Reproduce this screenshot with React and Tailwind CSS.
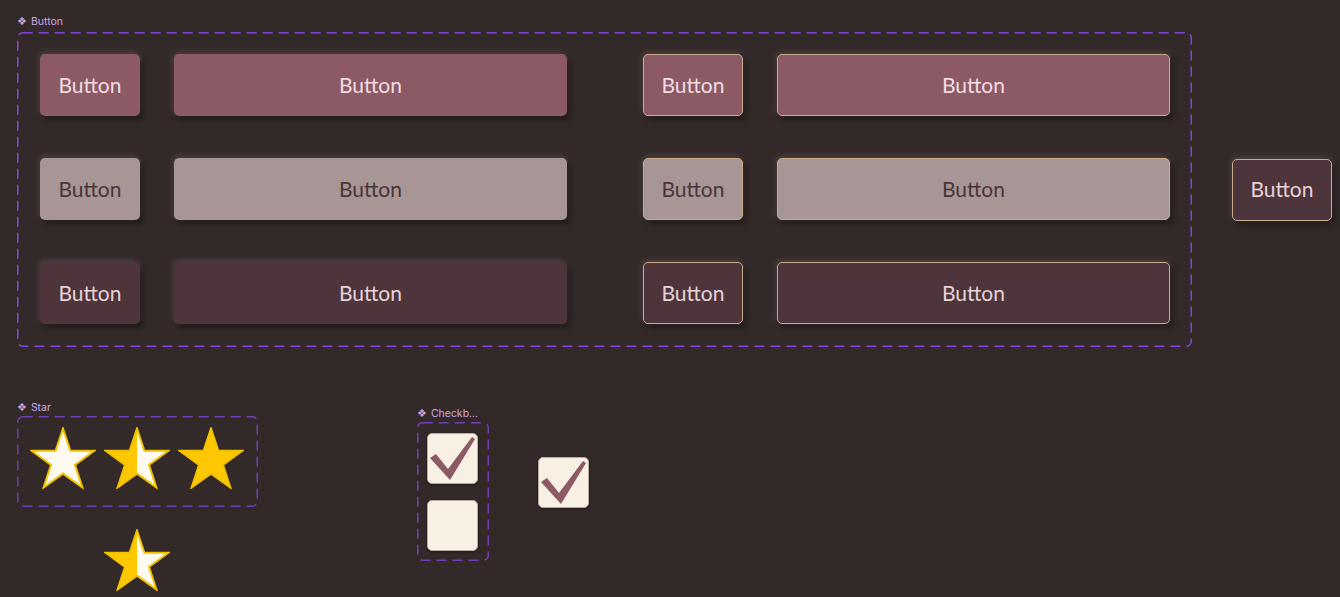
import React from "react";

const ROWS = [
  { bg: "bg-[#8b5a64]", text: "text-[#f3dde3]" },
  { bg: "bg-[#a89596]", text: "text-[#4a3539]" },
  { bg: "bg-[#4e353b]", text: "text-[#e8d2d8]" },
];

const SHADOW =
  "shadow-[-1px_-2px_6px_rgba(255,255,255,0.13),3px_4px_6px_rgba(0,0,0,0.4)]";

function Btn({ row, wide, outlined }) {
  const r = ROWS[row];
  return (
    <button
      className={`${wide ? "w-[393px]" : "w-[100px]"} h-[62px] shrink-0 rounded-[5px] ${r.bg} ${r.text} ${SHADOW} ${
        outlined ? "border border-[#c9ab8a]" : ""
      } flex items-center justify-center text-[21px] font-normal pb-[1px]`}
    >
      Button
    </button>
  );
}

function Label({ children }) {
  return (
    <div className="flex items-center gap-[4px] h-[12px] text-[10.5px] leading-[12px] text-[#c9a7e6] font-['Inter','DejaVu_Sans',sans-serif]">
      <span className="font-['DejaVu_Sans'] text-[11px]">❖</span>
      <span>{children}</span>
    </div>
  );
}

// dashed outline drawn over the frame, Figma-style long dashes
function Frame({ className, color, children }) {
  return (
    <div className={`relative ${className}`}>
      <svg className="absolute inset-0 w-full h-full pointer-events-none overflow-visible">
        <rect
          x="0.75"
          y="0.75"
          width="calc(100% - 1.5px)"
          height="calc(100% - 1.5px)"
          rx="5"
          fill="none"
          stroke={color}
          strokeWidth="1.5"
          strokeDasharray="10 6"
        />
      </svg>
      {children}
    </div>
  );
}

const STAR_POINTS =
  "33,1.5 40.4,23.8 64.4,23.8 45,37.9 52.4,60.5 33,46.6 13.6,60.5 21,37.9 1.6,23.8 25.6,23.8";

function Star({ kind, id }) {
  const fill =
    kind === "full" ? "#ffc800" : kind === "empty" ? "#fffaf0" : `url(#${id})`;
  return (
    <svg width="66" height="62" viewBox="0 0 66 62" className="shrink-0">
      {kind === "half" && (
        <defs>
          <linearGradient id={id} x1="0" x2="1" y1="0" y2="0">
            <stop offset="50%" stopColor="#ffc800" />
            <stop offset="50%" stopColor="#fffaf0" />
          </linearGradient>
        </defs>
      )}
      <polygon
        points={STAR_POINTS}
        fill={fill}
        stroke="#f2c200"
        strokeWidth="2"
        strokeLinejoin="miter"
      />
    </svg>
  );
}

function Checkbox({ checked }) {
  return (
    <div className="w-[51px] h-[51px] shrink-0 rounded-[5px] bg-[#f8f0e3] border border-[#b9aca1] shadow-[0_1px_3px_rgba(0,0,0,0.45)] relative">
      {checked && (
        <svg
          width="51"
          height="51"
          viewBox="0 0 51 51"
          className="absolute -left-px -top-px overflow-visible"
        >
          <path d="M3 25 L9 21 L21 36 L45 4 L48 6 L23 47 Z" fill="#8b5a64" />
        </svg>
      )}
    </div>
  );
}

export default function App() {
  return (
    <div className="w-full h-[597px] overflow-hidden bg-[#332928] pl-[17px] pt-[16px] font-['Lato','Open_Sans',sans-serif]">
      <Label>Button</Label>
      <div className="mt-[4px] flex items-center gap-[40px]">
        <Frame
          color="#8444dc"
          className="w-[1175px] h-[315px] shrink-0 pt-[22px] pl-[23px] flex flex-col gap-[42px]"
        >
          {[0, 1, 2].map((row) => (
            <div key={row} className="flex">
              <Btn row={row} />
              <div className="ml-[34px]">
                <Btn row={row} wide />
              </div>
              <div className="ml-[76px]">
                <Btn row={row} outlined />
              </div>
              <div className="ml-[34px]">
                <Btn row={row} wide outlined />
              </div>
            </div>
          ))}
        </Frame>
        <Btn row={2} outlined />
      </div>

      <div className="mt-[55px] flex items-start">
        <div className="w-[241px] shrink-0">
          <Label>Star</Label>
          <Frame
            color="#6e40b6"
            className="mt-[2px] h-[91px] pt-[11px] pl-[13px] flex gap-[8px]"
          >
            <Star kind="empty" />
            <Star kind="half" id="half-a" />
            <Star kind="full" />
          </Frame>
          <div className="mt-[22px] ml-[87px]">
            <Star kind="half" id="half-b" />
          </div>
        </div>

        <div className="ml-[159px] mt-[6px]">
          <Label>Checkb...</Label>
          <Frame
            color="#6e40b6"
            className="mt-[2px] w-[72px] h-[139px] pt-[11px] pl-[10px] flex flex-col gap-[16px]"
          >
            <Checkbox checked />
            <Checkbox />
          </Frame>
        </div>

        <div className="ml-[49px] mt-[55px]">
          <Checkbox checked />
        </div>
      </div>
    </div>
  );
}
